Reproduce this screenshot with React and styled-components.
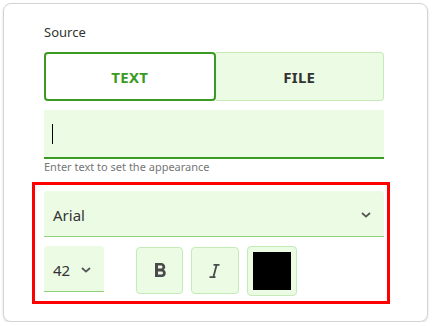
import React from 'react'
import styled, { createGlobalStyle } from 'styled-components'

const GlobalStyle = createGlobalStyle`
  body {
    margin: 0;
    background: #ffffff;
    font-family: "Noto Sans", "Open Sans", sans-serif;
  }
`

const Card = styled.div`
  box-sizing: border-box;
  margin: 3px 0 0 3px;
  width: 425px;
  height: 319px;
  border: 1px solid #d4d4d4;
  border-radius: 8px;
  box-shadow: 0 1px 2px rgba(0, 0, 0, 0.18);
  padding: 19px 0 0 40px;
  display: flex;
  flex-direction: column;
`

const Label = styled.div`
  font-size: 13px;
  line-height: 18px;
  color: #333;
  margin-bottom: 11px;
`

const Toggle = styled.div`
  display: flex;
  width: 340px;
  height: 49px;
`

const ToggleButton = styled.div`
  box-sizing: border-box;
  flex: 1;
  display: flex;
  align-items: center;
  justify-content: center;
  font-size: 15px;
  font-weight: 700;
  letter-spacing: 0.3px;
  color: ${(p) => (p.active ? '#3a9a22' : '#333')};
  background: ${(p) => (p.active ? '#ffffff' : '#ecfce4')};
  border: ${(p) => (p.active ? '2px solid #3a9a22' : '1px solid #c6ebb8')};
  border-radius: ${(p) => (p.active ? '4px' : '0 4px 4px 0')};
  ${(p) => !p.active && 'border-left: none;'}
`

const TextField = styled.div`
  box-sizing: border-box;
  margin-top: 9px;
  width: 340px;
  height: 49px;
  background: #ecfce4;
  border-bottom: 2px solid #3a9a22;
  display: flex;
  align-items: center;
  padding-left: 8px;
`

const Caret = styled.span`
  width: 1px;
  height: 20px;
  background: #000;
  margin-top: 1px;
`

const Helper = styled.div`
  font-size: 11px;
  line-height: 16px;
  color: #767676;
`

const Highlight = styled.div`
  box-sizing: border-box;
  margin: 7px 0 0 -12px;
  width: 358px;
  border: 3px solid #ff0000;
  padding: 6px 3px 5px 9px;
  display: flex;
  flex-direction: column;
`

const Select = styled.div`
  box-sizing: border-box;
  width: ${(p) => p.width}px;
  height: ${(p) => p.height}px;
  background: #ecfce4;
  border-bottom: 1px solid #8fd27b;
  border-radius: 4px 4px 0 0;
  display: flex;
  align-items: center;
  justify-content: space-between;
  padding: 2px ${(p) => p.right}px 0 9px;
  font-size: 15px;
  color: #333;
`

const Row = styled.div`
  display: flex;
  align-items: flex-start;
  margin-top: 9px;
`

const Tools = styled.div`
  display: flex;
  gap: 8px;
  margin-left: 32px;
`

const ToolButton = styled.div`
  box-sizing: border-box;
  width: ${(p) => p.w}px;
  height: ${(p) => p.h}px;
  margin-top: ${(p) => p.top}px;
  background: #ecfce4;
  border: 1px solid #c3ebb5;
  border-radius: 4px;
  display: flex;
  align-items: center;
  justify-content: center;
  color: #4a4a4a;
`

const Swatch = styled.div`
  width: 38px;
  height: 38px;
  background: ${(p) => p.color};
`

const Chevron = () => (
  <svg width="10" height="6" viewBox="0 0 10 6">
    <path d="M1 1l4 3.6L9 1" fill="none" stroke="#555" strokeWidth="1.8" />
  </svg>
)

const BoldIcon = () => (
  <svg width="24" height="24" viewBox="0 0 24 24">
    <path
      fill="#4a4a4a"
      d="M15.6 10.79c.97-.67 1.65-1.77 1.65-2.79 0-2.26-1.75-4-4-4H7v14h7.04c2.09 0 3.71-1.7 3.71-3.79 0-1.52-.86-2.82-2.1-3.42zM10 6.5h3c.83 0 1.5.67 1.5 1.5s-.67 1.5-1.5 1.5h-3v-3zm3.5 9H10v-3h3.5c.83 0 1.5.67 1.5 1.5s-.67 1.5-1.5 1.5z"
    />
  </svg>
)

const ItalicIcon = () => (
  <svg width="24" height="24" viewBox="0 0 24 24">
    <path
      fill="none"
      stroke="#4a4a4a"
      strokeWidth="1.8"
      d="M10.5 5.9h6M6.5 18.1h6M13.6 5.9l-3.2 12.2"
    />
  </svg>
)

export default function App() {
  return (
    <>
      <GlobalStyle />
      <Card>
        <Label>Source</Label>
        <Toggle>
          <ToggleButton active>TEXT</ToggleButton>
          <ToggleButton>FILE</ToggleButton>
        </Toggle>
        <TextField>
          <Caret />
        </TextField>
        <Helper>Enter text to set the appearance</Helper>
        <Highlight>
          <Select width={340} height={46} right={13}>
            <span>Arial</span>
            <Chevron />
          </Select>
          <Row>
            <Select width={60} height={46} right={13}>
              <span>42</span>
              <Chevron />
            </Select>
            <Tools>
              <ToolButton w={47} h={47} top={1}>
                <BoldIcon />
              </ToolButton>
              <ToolButton w={48} h={47} top={1}>
                <ItalicIcon />
              </ToolButton>
              <ToolButton w={50} h={50} top={0}>
                <Swatch color="#000000" />
              </ToolButton>
            </Tools>
          </Row>
        </Highlight>
      </Card>
    </>
  )
}
